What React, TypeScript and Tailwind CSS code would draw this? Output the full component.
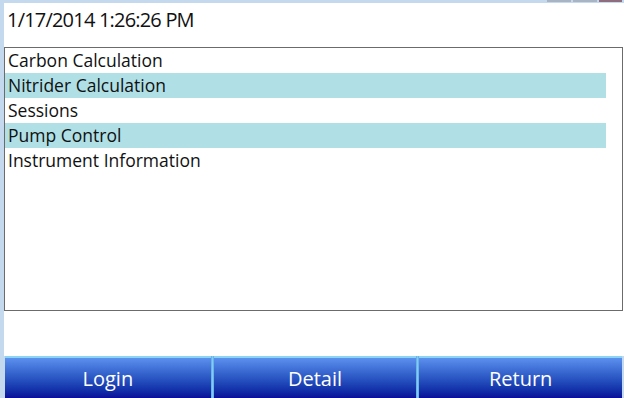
import React from "react";

const items = [
  { label: "Carbon Calculation", hl: false },
  { label: "Nitrider Calculation", hl: true },
  { label: "Sessions", hl: false },
  { label: "Pump Control", hl: true },
  { label: "Instrument Information", hl: false },
];

export default function App() {
  return (
    <div
      className="w-[624px] h-[398px] bg-white flex flex-col overflow-hidden"
      style={{ fontFamily: '"Open Sans", "Noto Sans", sans-serif' }}
    >
      <div className="h-[3px] bg-[#c4d8ee] flex justify-end items-start pr-[2px] gap-[2px] shrink-0">
        <div className="w-[24px] h-[2px] bg-[#a8b4c4]" />
        <div className="w-[24px] h-[2px] bg-[#a8b4c4]" />
        <div className="w-[23px] h-[2px] bg-[#8e6e7e]" />
      </div>
      <div className="flex flex-1 min-h-0">
        <div className="w-[4px] bg-[#c4d8ee] shrink-0" />
        <div className="flex-1 flex flex-col min-w-0">
          <div className="h-[44px] shrink-0 pl-[3px] pt-[3px] text-[20px] leading-[27px] tracking-[-0.8px] text-[#111]">
            1/17/2014 1:26:26 PM
          </div>
          <div className="h-[264px] shrink-0 mr-[1px] border border-[#6b6b6b] pr-[16px]">
            {items.map((it) => (
              <div
                key={it.label}
                className={`h-[25px] pl-[3px] text-[17.5px] leading-[25px] text-[#111] ${
                  it.hl ? "bg-[#b0e0e6]" : ""
                }`}
              >
                {it.label}
              </div>
            ))}
          </div>
          <div className="h-[45px] shrink-0" />
          <div className="flex-1 flex pl-[1px] pr-[2px] bg-[#c4d8ee]">
            {["Login", "Detail", "Return"].map((b, i) => (
              <div key={b} className="flex flex-1">
                {i > 0 && <div className="w-[3px] bg-[#80ccf4] border-x border-[#6ab4e8]" />}
                <div className="flex-1 flex flex-col">
                  <div className="h-[2px] bg-[#8cd4f6]" />
                  <div className="flex-1 bg-gradient-to-b from-[#5c90ee] to-[#0c0c98] text-white text-[20px] flex items-center justify-center pt-[3px] pb-[1px]">
                    {b}
                  </div>
                </div>
              </div>
            ))}
          </div>
        </div>
      </div>
    </div>
  );
}
